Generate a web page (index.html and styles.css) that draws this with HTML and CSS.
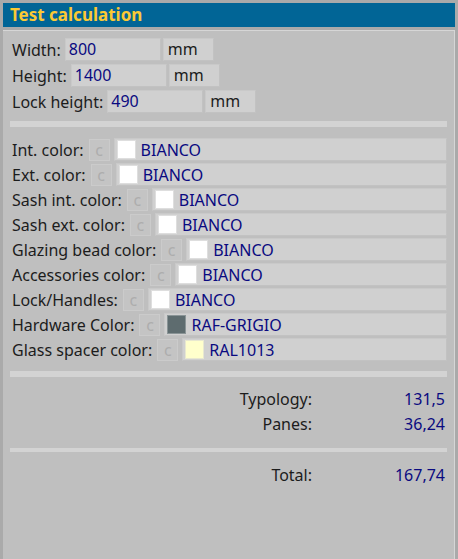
FILE: index.html
```html
<!DOCTYPE html>
<html>
<head>
<meta charset="utf-8">
<link rel="stylesheet" href="styles.css">
</head>
<body>
<div class="title">Test calculation</div>
<div class="panel">
  <div class="dims">
    <div class="drow"><span class="lbl">Width:</span><span class="inp val">800</span><span class="unit">mm</span></div>
    <div class="drow"><span class="lbl">Height:</span><span class="inp val">1400</span><span class="unit">mm</span></div>
    <div class="drow"><span class="lbl">Lock height:</span><span class="inp val">490</span><span class="unit">mm</span></div>
  </div>
  <div class="sep"></div>
  <div class="colors">
    <div class="crow"><span class="lbl">Int. color:</span><span class="cbtn">c</span><span class="cfield"><span class="sw white"></span><span class="val">BIANCO</span></span></div>
    <div class="crow"><span class="lbl">Ext. color:</span><span class="cbtn">c</span><span class="cfield"><span class="sw white"></span><span class="val">BIANCO</span></span></div>
    <div class="crow"><span class="lbl">Sash int. color:</span><span class="cbtn">c</span><span class="cfield"><span class="sw white"></span><span class="val">BIANCO</span></span></div>
    <div class="crow"><span class="lbl">Sash ext. color:</span><span class="cbtn">c</span><span class="cfield"><span class="sw white"></span><span class="val">BIANCO</span></span></div>
    <div class="crow"><span class="lbl">Glazing bead color:</span><span class="cbtn">c</span><span class="cfield"><span class="sw white"></span><span class="val">BIANCO</span></span></div>
    <div class="crow"><span class="lbl">Accessories color:</span><span class="cbtn">c</span><span class="cfield"><span class="sw white"></span><span class="val">BIANCO</span></span></div>
    <div class="crow"><span class="lbl">Lock/Handles:</span><span class="cbtn">c</span><span class="cfield"><span class="sw white"></span><span class="val">BIANCO</span></span></div>
    <div class="crow"><span class="lbl">Hardware Color:</span><span class="cbtn">c</span><span class="cfield"><span class="sw grey"></span><span class="val">RAF-GRIGIO</span></span></div>
    <div class="crow"><span class="lbl">Glass spacer color:</span><span class="cbtn">c</span><span class="cfield"><span class="sw cream"></span><span class="val">RAL1013</span></span></div>
  </div>
  <div class="sep sep1"></div>
  <div class="summary">
    <span class="slbl">Typology:</span><span class="sval">131,5</span>
    <span class="slbl">Panes:</span><span class="sval">36,24</span>
  </div>
  <div class="sep thin"></div>
  <div class="summary total">
    <span class="slbl">Total:</span><span class="sval">167,74</span>
  </div>
</div>
</body>
</html>
```
FILE: styles.css
```css
html, body {
  margin: 0;
  padding: 0;
  height: 100%;
}
body {
  background: #aaaaaa;
  font-family: "Noto Sans", "Open Sans", sans-serif;
  font-size: 16px;
  color: #1c1c1c;
  padding: 3px 3px 0 3px;
  box-sizing: border-box;
  display: flex;
  flex-direction: column;
  overflow: hidden;
}
.title {
  height: 24px;
  background: #016596;
  color: #fbc934;
  font-weight: bold;
  font-size: 17px;
  line-height: 23px;
  padding-left: 7px;
  flex: none;
}
.panel {
  margin-top: 3px;
  flex: 1;
  background: #bfbfbf;
  border-top: 1px solid #d6d6d6;
  border-right: 1px solid #d6d6d6;
  padding: 7px 7px 0 7px;
}
.dims {
  display: flex;
  flex-direction: column;
  gap: 3px;
}
.drow, .crow {
  display: flex;
  align-items: center;
  height: 23px;
}
.lbl {
  padding-left: 2px;
  margin-right: 4px;
  white-space: nowrap;
}
.val {
  color: #0a0a80;
}
.inp {
  width: 96px;
  height: 23px;
  box-sizing: border-box;
  background: #d0d0d0;
  border: 1px solid #c9c9c9;
  border-right-color: #c2c2c2;
  border-bottom-color: #c2c2c2;
  padding-left: 3px;
  line-height: 21px;
}
.unit {
  width: 51px;
  height: 23px;
  box-sizing: border-box;
  margin-left: 2px;
  background: #d0d0d0;
  border: 1px solid #c9c9c9;
  border-right-color: #c2c2c2;
  border-bottom-color: #c2c2c2;
  padding-left: 4px;
  line-height: 21px;
}
.sep {
  height: 6px;
  background: #d3d3d3;
  margin-top: 8px;
}
.colors {
  margin-top: 11px;
  display: flex;
  flex-direction: column;
  gap: 2px;
}
.cbtn {
  width: 21px;
  height: 22px;
  box-sizing: border-box;
  background: #c4c4c4;
  border: 1px solid #cbcbcb;
  color: #adadad;
  text-align: center;
  line-height: 20px;
  font-size: 16px;
  margin-left: 1px;
  flex: none;
}
.cfield {
  flex: 1;
  height: 23px;
  box-sizing: border-box;
  margin-left: 4px;
  background: #d0d0d0;
  border: 1px solid #c9c9c9;
  border-right-color: #c2c2c2;
  border-bottom-color: #c2c2c2;
  display: flex;
  align-items: center;
  padding-left: 2px;
}
.sw {
  width: 19px;
  height: 19px;
  box-sizing: border-box;
  border: 1px solid #dedede;
  margin-right: 5px;
  flex: none;
}
.white { background: #ffffff; }
.grey { background: #5e6c6f; border-color: #8a9496; }
.cream { background: #ffffcc; border-color: #e8e8d0; }
.sep1 {
  margin-top: 10px;
}
.summary {
  display: grid;
  grid-template-columns: 1fr 133px;
  grid-auto-rows: 25px;
  align-items: center;
  margin-top: 9px;
  margin-right: 2px;
}
.slbl {
  text-align: right;
}
.sval {
  text-align: right;
  color: #0a0a80;
}
.sep.thin {
  height: 4px;
  margin-top: 12px;
}
.total {
  margin-top: 10px;
}
```
